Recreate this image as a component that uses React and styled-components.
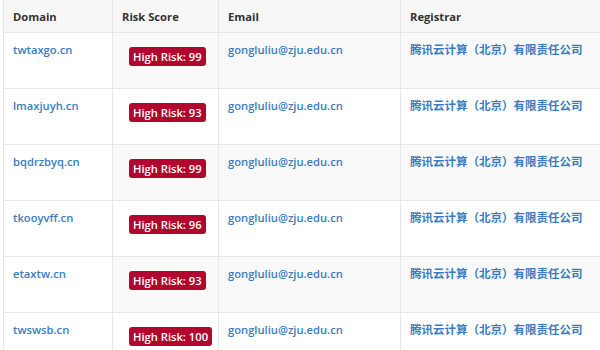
import React from "react";
import styled, { createGlobalStyle } from "styled-components";

const Global = createGlobalStyle`
  html, body { margin: 0; padding: 0; background: #fff; }
  body { font-family: "Open Sans", "Noto Sans CJK SC", sans-serif; }
`;

const Wrap = styled.div`
  width: 600px;
  height: 350px;
  overflow: hidden;
  padding-left: 3px;
  box-sizing: border-box;
`;

const Table = styled.table`
  border-collapse: collapse;
  table-layout: fixed;
  width: 700px;
  font-size: 11.2px;
  margin-top: -1px;
`;

const Th = styled.th`
  text-align: left;
  font-weight: 700;
  color: #333;
  background: #f7f7f7;
  height: 33px;
  padding: 0 9px;
  border: 1px solid #e6e6e6;
  box-sizing: border-box;
  width: ${(p) => p.$w}px;
`;

const Row = styled.tr`
  td { background: ${(p) => (p.$striped ? "#f9f9f9" : "#fff")}; }
  td:first-child { background: #fff; }
`;

const Td = styled.td`
  vertical-align: top;
  height: 56px;
  box-sizing: border-box;
  padding: 8px 9px;
  border: 1px solid #e6e6e6;
  line-height: 17px;
  white-space: nowrap;
`;

const Link = styled.a`
  color: #3a7dbf;
  text-decoration: none;
  font-weight: 600;
`;

const CjkLink = styled(Link)`
  font-family: "Noto Sans CJK SC", sans-serif;
  font-weight: 700;
  font-size: 11.5px;
`;

const Badge = styled.span`
  display: inline-block;
  margin: 6px 0 0 7px;
  padding: 0 4px;
  height: 19px;
  line-height: 19px;
  border-radius: 3px;
  background: #b3062f;
  color: #fff;
  font-weight: 600;
  font-size: 11.2px;
  white-space: nowrap;
`;

const rows = [
  ["twtaxgo.cn", 99],
  ["lmaxjuyh.cn", 93],
  ["bqdrzbyq.cn", 99],
  ["tkooyvff.cn", 96],
  ["etaxtw.cn", 93],
  ["twswsb.cn", 100],
];

export default function App() {
  return (
    <>
      <Global />
      <Wrap>
        <Table>
          <thead>
            <tr>
              <Th $w={109}>Domain</Th>
              <Th $w={106}>Risk Score</Th>
              <Th $w={182}>Email</Th>
              <Th $w={303}>Registrar</Th>
            </tr>
          </thead>
          <tbody>
            {rows.map(([d, s], i) => (
              <Row key={d} $striped={i % 2 === 0}>
                <Td>
                  <Link href="#">{d}</Link>
                </Td>
                <Td>
                  <Badge>High Risk: {s}</Badge>
                </Td>
                <Td>
                  <Link href="#">gongluliu@zju.edu.cn</Link>
                </Td>
                <Td>
                  <CjkLink href="#">腾讯云计算（北京）有限责任公司</CjkLink>
                </Td>
              </Row>
            ))}
          </tbody>
        </Table>
      </Wrap>
    </>
  );
}
